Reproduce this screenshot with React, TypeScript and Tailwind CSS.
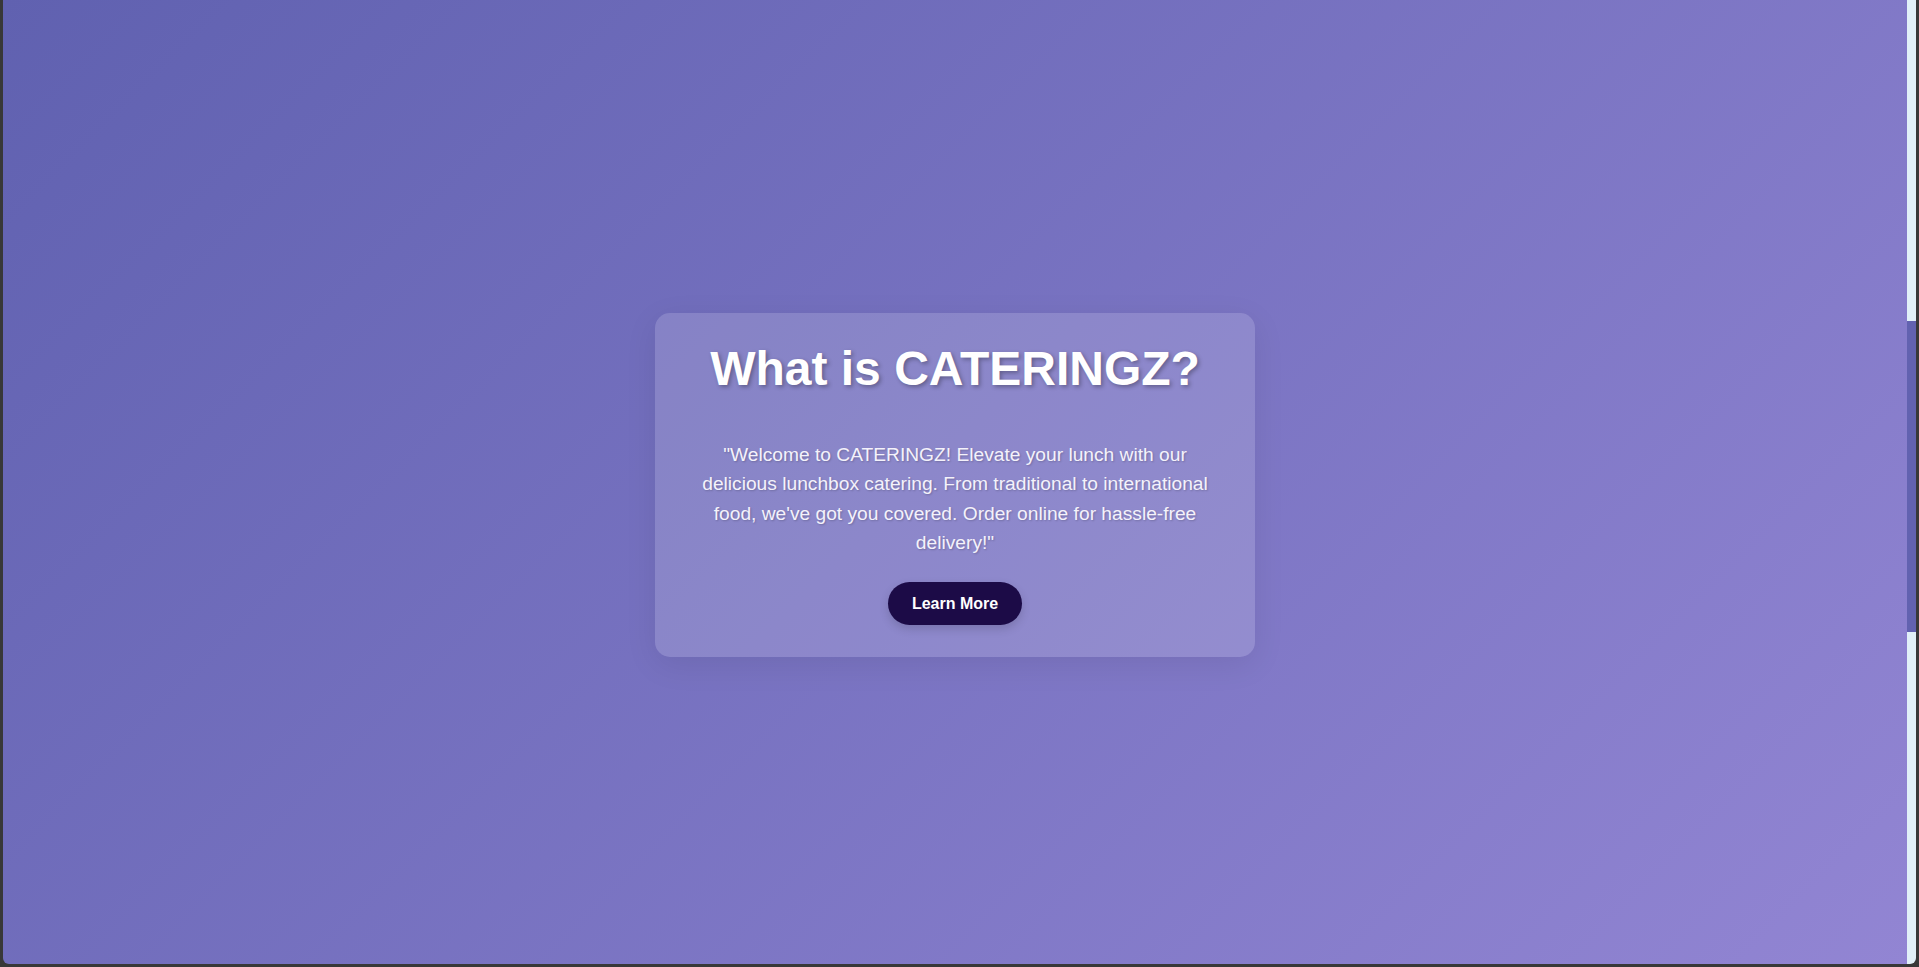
export default function App() {
  return (
    <div className="h-[967px] w-full overflow-hidden bg-[#383838] pl-[3px] pr-[3px] pb-[3px] font-['Liberation_Sans',Arial,sans-serif]">
      <div className="flex h-full overflow-hidden rounded-b-[6px]">
        {/* page */}
        <main className="flex flex-1 items-start justify-center bg-linear-135 from-[#6061b0] to-[#9285d3] pt-[313px]">
          <section className="w-[600px] rounded-[15px] bg-white/15 px-10 py-8 text-center shadow-[0_8px_32px_rgba(0,0,0,0.08)]">
            <h2 className="text-5xl leading-none font-bold text-white [text-shadow:2px_2px_4px_rgba(0,0,0,0.3)]">
              What is CATERINGZ?
            </h2>
            <p className="mt-[47px] text-[19.2px] leading-[29.4px] text-[#f4f2fb] [text-shadow:1px_1px_2px_rgba(0,0,0,0.2)]">
              "Welcome to CATERINGZ! Elevate your lunch with our delicious lunchbox catering. From
              traditional to international food, we've got you covered. Order online for
              hassle-free delivery!"
            </p>
            <button className="mt-6 rounded-full bg-[#1c0b47] px-6 py-3 text-base leading-[19px] font-bold text-white shadow-[0_4px_10px_rgba(0,0,0,0.15)]">
              Learn More
            </button>
          </section>
        </main>

        {/* scrollbar */}
        <div className="flex w-[9px] flex-col bg-[#e1f0f8]">
          <div className="h-[321px]" />
          <div className="h-[311px] bg-[#6262b0]" />
        </div>
      </div>
    </div>
  );
}
